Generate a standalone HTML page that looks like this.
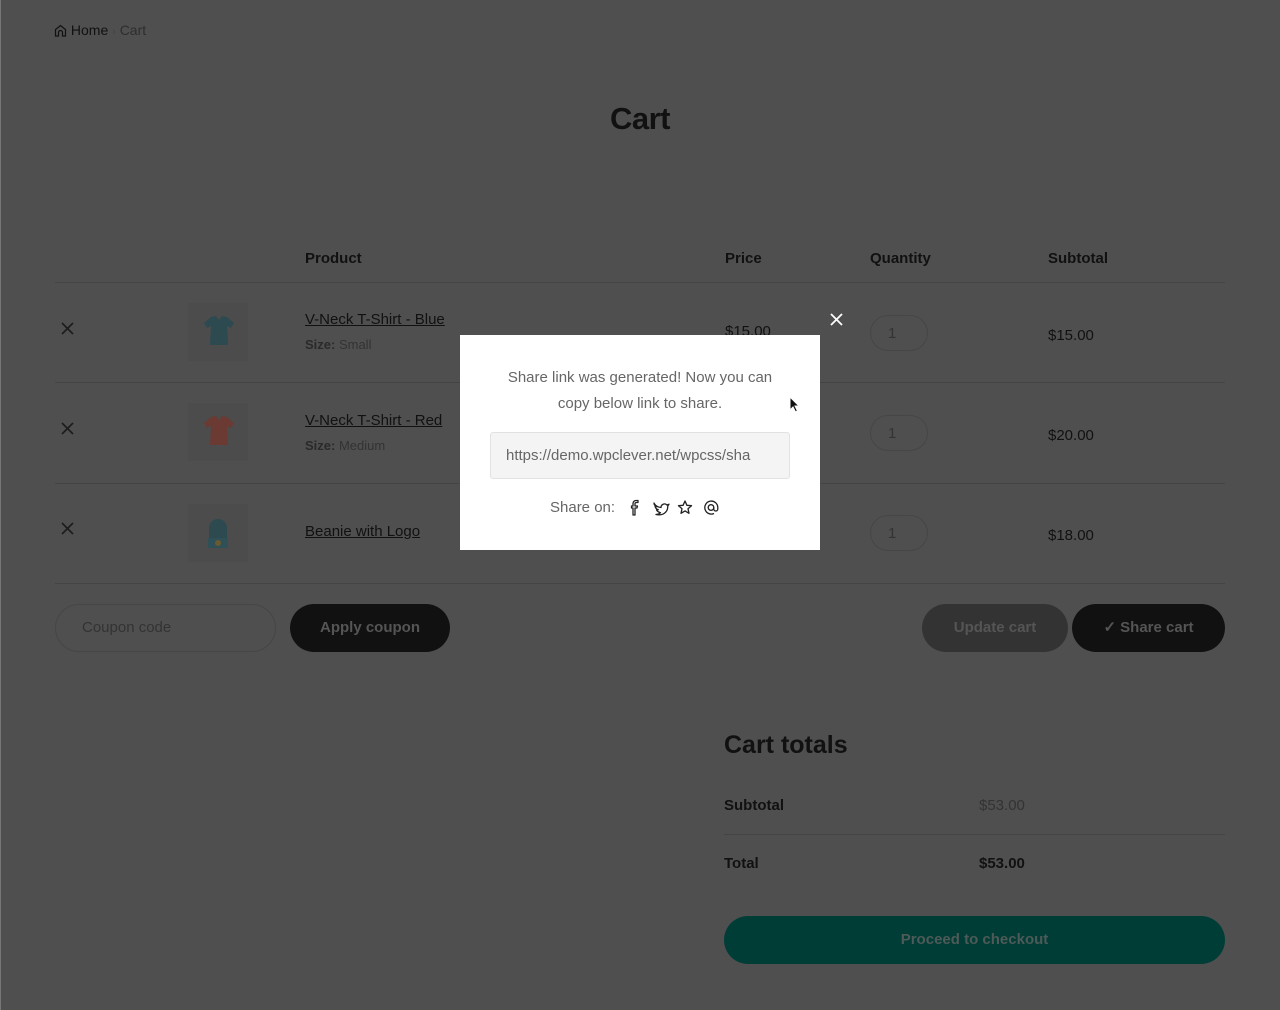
<!DOCTYPE html>
<html><head><meta charset="utf-8"><style>
*{box-sizing:border-box;margin:0;padding:0}
body{width:1280px;height:1010px;background:#4f4f4f;font-family:"Liberation Sans",sans-serif;color:#111;position:relative;overflow:hidden}
.a{position:absolute}
.hr{position:absolute;left:55px;width:1170px;height:1px;background:#444}
.x{position:absolute;left:61px}
.th{position:absolute;left:188px;width:60px;height:58px;background:#4c4c4c}
.nm{position:absolute;left:305px;font-size:15px;text-decoration:underline;color:#111}
.sz{position:absolute;left:305px;font-size:13px;color:#333}
.sz b{color:#2a2a2a}
.q{position:absolute;left:870px;width:58px;height:36px;border:1px solid #464646;border-radius:18px;color:#333;font-size:15px;padding:9px 0 0 17px}
.pr{position:absolute;font-size:15px;color:#111}
.btn{position:absolute;height:48px;border-radius:24px;font-weight:bold;font-size:15px;text-align:center;line-height:48px}
</style></head><body>
<div class="a" style="left:0;top:0;width:1px;height:1010px;background:#777"></div>
<div class="a" style="left:54px;top:22px;font-size:14px;color:#111">
<svg width="13" height="13" viewBox="0 0 13 13" style="vertical-align:-2px"><path d="M1.5 12V5.5L6.5 1.5 11.5 5.5V12H8.5V8.5a2 2 0 0 0-4 0V12Z" fill="none" stroke="#111" stroke-width="1.2"/></svg>
Home <span style="color:#444;font-size:11px">›</span> <span style="color:#2e2e2e">Cart</span></div>
<div class="a" style="left:0;width:1280px;top:101px;text-align:center;font-size:31px;font-weight:bold;letter-spacing:-0.5px">Cart</div>
<div class="a" style="left:305px;top:250px;font-weight:bold;font-size:15px">Product</div>
<div class="a" style="left:725px;top:250px;font-weight:bold;font-size:15px">Price</div>
<div class="a" style="left:870px;top:250px;font-weight:bold;font-size:15px">Quantity</div>
<div class="a" style="left:1048px;top:250px;font-weight:bold;font-size:15px">Subtotal</div>
<div class="hr" style="top:282px"></div>
<div class="hr" style="top:382px"></div>
<div class="hr" style="top:483px"></div>
<div class="hr" style="top:583px"></div>
<svg class="x" style="top:322px" width="13" height="13" viewBox="0 0 13 13"><path d="M1 1L12 12M12 1L1 12" stroke="#1c1c1c" stroke-width="1.6"/></svg>
<svg class="x" style="top:422px" width="13" height="13" viewBox="0 0 13 13"><path d="M1 1L12 12M12 1L1 12" stroke="#1c1c1c" stroke-width="1.6"/></svg>
<svg class="x" style="top:522px" width="13" height="13" viewBox="0 0 13 13"><path d="M1 1L12 12M12 1L1 12" stroke="#1c1c1c" stroke-width="1.6"/></svg>
<div class="th" style="top:303px"></div><div class="th" style="top:403px"></div><div class="th" style="top:504px"></div>
<svg class="a" style="left:198px;top:313px" width="40" height="40" viewBox="0 0 40 40"><path d="M13 4l5-1 3 4 3-4 5 1 7 6-3 5-4-2 1 19H12l1-19-4 2-3-5z" fill="#2d4a50"/></svg>
<svg class="a" style="left:198px;top:413px" width="40" height="40" viewBox="0 0 40 40"><path d="M13 4l5-1 3 4 3-4 5 1 7 6-3 5-4-2 1 19H12l1-19-4 2-3-5z" fill="#6a3a33"/></svg>
<svg class="a" style="left:198px;top:514px" width="40" height="40" viewBox="0 0 40 40"><path d="M11 24V14a9 9 0 0 1 18 0v10z" fill="#2d4a50"/><rect x="10" y="24" width="20" height="10" fill="#305058"/><circle cx="20" cy="29" r="3" fill="#6b5a2e"/></svg>
<div class="nm" style="top:311px">V-Neck T-Shirt - Blue</div><div class="sz" style="top:337px"><b>Size:</b> Small</div>
<div class="nm" style="top:412px">V-Neck T-Shirt - Red</div><div class="sz" style="top:438px"><b>Size:</b> Medium</div>
<div class="nm" style="top:523px">Beanie with Logo</div>
<div class="pr" style="left:725px;top:323px">$15.00</div>
<div class="q" style="top:315px">1</div><div class="q" style="top:415px">1</div><div class="q" style="top:515px">1</div>
<div class="pr" style="left:1048px;top:327px">$15.00</div><div class="pr" style="left:1048px;top:427px">$20.00</div><div class="pr" style="left:1048px;top:527px">$18.00</div>
<div class="a" style="left:55px;top:604px;width:221px;height:48px;border:1px solid #464646;border-radius:24px;font-size:15px;color:#333;padding:14px 0 0 26px">Coupon code</div>
<div class="btn" style="left:290px;top:604px;width:160px;background:#111;color:#555">Apply coupon</div>
<div class="btn" style="left:922px;top:604px;width:146px;background:#333;color:#555">Update cart</div>
<div class="btn" style="left:1072px;top:604px;width:153px;background:#111;color:#555">✓ Share cart</div>
<div class="a" style="left:724px;top:731px;font-size:25px;font-weight:bold">Cart totals</div>
<div class="a" style="left:724px;top:797px;font-size:15px;font-weight:bold">Subtotal</div>
<div class="a" style="left:979px;top:797px;font-size:15px;color:#333">$53.00</div>
<div class="a" style="left:724px;top:834px;width:501px;height:1px;background:#444"></div>
<div class="a" style="left:724px;top:855px;font-size:15px;font-weight:bold">Total</div>
<div class="a" style="left:979px;top:855px;font-size:15px;font-weight:bold">$53.00</div>
<div class="btn" style="left:724px;top:916px;width:501px;background:#003d36;color:#4d5a57">Proceed to checkout</div>
<svg class="a" style="left:830px;top:313px" width="13" height="13" viewBox="0 0 13 13"><path d="M1 1L12 12M12 1L1 12" stroke="#fff" stroke-width="1.8"/></svg>
<div class="a" style="left:460px;top:335px;width:360px;height:215px;background:#fff">
<div class="a" style="left:30px;top:30px;width:300px;text-align:center;font-size:15px;line-height:26px;color:#666">Share link was generated! Now you can copy below link to share.</div>
<div class="a" style="left:30px;top:97px;width:300px;height:47px;background:#f4f4f4;border:1px solid #e2e2e2;border-radius:3px;font-size:15px;color:#666;padding:14px 0 0 15px;white-space:nowrap;overflow:hidden">https://demo.wpclever.net/wpcss/sha</div>
<div class="a" style="left:90px;top:164px;font-size:15px;color:#666">Share on:</div>
<svg class="a" style="left:167px;top:164px" width="100" height="18" viewBox="0 0 100 18">
<g fill="none" stroke="#222" stroke-width="1.3" stroke-linejoin="round">
<path d="M9 3.5h2V1.5H9a3 3 0 0 0-3 3V7H4.5v2H6v7h2V9h2l.5-2H8V5a1.5 1.5 0 0 1 1-1.5z"/>
<path d="M27 4q2 4 7 4.5A3.5 3.5 0 0 1 40 6l2-.8-1.3 2C41 13 36 17 29 15.5q3-.3 4.5-1.8-3.5-1-4-3 1 .2 1.8 0-3-1-3.2-3.5 1 .5 1.7.5Q27 6.5 27 4z"/>
<path d="M58 2l1.9 4.3 4.6.4-3.5 3 1 4.6-4-2.4-4 2.4 1-4.6-3.5-3 4.6-.4z"/>
<circle cx="84" cy="8.5" r="2.8"/><path d="M86.8 8.5v1.5a2 2 0 0 0 4 0V8.5A6.5 6.5 0 1 0 87 14.5"/>
</g></svg>
<svg class="a" style="left:329px;top:61px" width="12" height="18" viewBox="0 0 12 18"><path d="M1 1v13l3-3 2.5 5 2-1-2.5-5h4z" fill="#111" stroke="#fff" stroke-width="1"/></svg>
</div>
</body></html>
